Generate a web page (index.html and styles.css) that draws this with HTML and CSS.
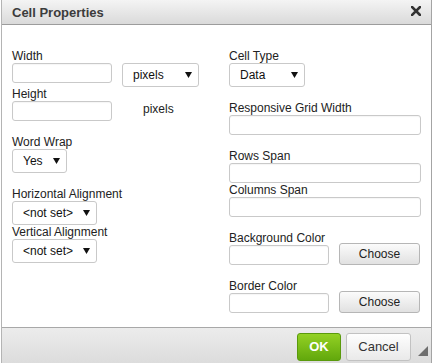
FILE: index.html
```html
<!DOCTYPE html>
<html lang="en">
<head>
    <meta charset="UTF-8">
    <meta name="viewport" content="width=device-width, initial-scale=1.0">
    <title>Cell Properties</title>
    <link rel="stylesheet" href="styles.css">
</head>
<body>
<div class="dialog">
    <div class="titlebar">
        <span class="title">Cell Properties</span>
        <svg class="close" width="10" height="10" viewBox="0 0 10 10">
            <path d="M1 1L9 9M9 1L1 9" stroke="#333" stroke-width="2.6" stroke-linecap="square"/>
        </svg>
    </div>

    <div class="content">
        <div class="col">
            <div class="group">
                <label>Width</label>
                <div class="row">
                    <input type="text" class="w100">
                    <span class="select w77">
                        <select><option>pixels</option></select>
                        <svg class="arrow" width="7" height="6"><path d="M0 0H7L3.5 6Z" fill="#111"/></svg>
                    </span>
                </div>
                <label>Height</label>
                <div class="row">
                    <input type="text" class="w100">
                    <span class="unit">pixels</span>
                </div>
            </div>
            <div class="group">
                <label>Word Wrap</label>
                <span class="select w55">
                    <select><option>Yes</option></select>
                    <svg class="arrow" width="7" height="6"><path d="M0 0H7L3.5 6Z" fill="#111"/></svg>
                </span>
            </div>
            <div class="group">
                <label>Horizontal Alignment</label>
                <span class="select w85">
                    <select><option>&lt;not set&gt;</option></select>
                    <svg class="arrow" width="7" height="6"><path d="M0 0H7L3.5 6Z" fill="#111"/></svg>
                </span>
                <label>Vertical Alignment</label>
                <span class="select w85">
                    <select><option>&lt;not set&gt;</option></select>
                    <svg class="arrow" width="7" height="6"><path d="M0 0H7L3.5 6Z" fill="#111"/></svg>
                </span>
            </div>
        </div>

        <div class="col">
            <div class="group">
                <label>Cell Type</label>
                <span class="select w76">
                    <select><option>Data</option></select>
                    <svg class="arrow" width="7" height="6"><path d="M0 0H7L3.5 6Z" fill="#111"/></svg>
                </span>
            </div>
            <div class="group">
                <label>Responsive Grid Width</label>
                <input type="text" class="wide">
            </div>
            <div class="group">
                <label>Rows Span</label>
                <input type="text" class="wide">
                <label>Columns Span</label>
                <input type="text" class="wide">
            </div>
            <div class="group">
                <label>Background Color</label>
                <div class="row">
                    <input type="text" class="w100">
                    <button class="choose">Choose</button>
                </div>
            </div>
            <div class="group">
                <label>Border Color</label>
                <div class="row">
                    <input type="text" class="w100">
                    <button class="choose">Choose</button>
                </div>
            </div>
        </div>
    </div>

    <div class="footer">
        <button class="ok">OK</button>
        <button class="cancel">Cancel</button>
        <svg class="grip" width="10" height="10"><polygon points="10,0 10,10 0,10" fill="#6e6e6e"/></svg>
    </div>
</div>
</body>
</html>
```

FILE: styles.css
```css
*{
    box-sizing: border-box;
}
body{
    margin: 0;
    background: #fff;
    font-family: "Liberation Sans", Arial, sans-serif;
    font-size: 12px;
    color: #222;
}
.dialog{
    margin-left: 1px;
    width: 431px;
    height: 363px;
    border-left: 1px solid #b4b4b4;
    border-right: 1px solid #a4a4a4;
    display: flex;
    flex-direction: column;
}
.titlebar{
    height: 28px;
    padding: 0 10px;
    display: flex;
    justify-content: space-between;
    align-items: center;
    background: linear-gradient(#f4f4f4, #dadada);
    border-bottom: 1px solid #9c9c9c;
}
.title{
    font-size: 13px;
    font-weight: bold;
    color: #3c3c3c;
    margin-top: 1px;
}
.close{
    display: block;
    margin-top: -1px;
}
.content{
    flex: 1;
    padding: 24px 0 0 10px;
    display: grid;
    grid-template-columns: 217px 1fr;
}
.group{
    margin-bottom: 14px;
}
label{
    display: block;
    height: 14px;
    line-height: 14px;
}
.row{
    display: flex;
    align-items: flex-start;
    gap: 10px;
}
input{
    display: block;
    height: 20px;
    border: 1px solid #c9c9c9;
    border-radius: 3px;
    padding: 0 4px;
    font: inherit;
    box-shadow: inset 0 1px 1px rgba(0, 0, 0, 0.04);
}
.w100{ width: 100px; }
.wide{ width: 192px; }
.unit{
    line-height: 14px;
    margin-left: 21px;
    margin-top: 1px;
}
.select{
    position: relative;
    display: block;
    height: 24px;
}
.select select{
    appearance: none;
    -webkit-appearance: none;
    width: 100%;
    height: 24px;
    border: 1px solid #c9c9c9;
    border-radius: 3px;
    background: #fff;
    padding: 0 0 0 10px;
    font: inherit;
    color: #111;
}
.arrow{
    position: absolute;
    right: 7px;
    top: 9px;
}
.w77{ width: 77px; }
.w76{ width: 76px; }
.w55{ width: 55px; }
.w85{ width: 85px; }
button{
    font-family: inherit;
    border-radius: 3px;
    cursor: pointer;
}
.choose{
    width: 81px;
    height: 22px;
    margin-top: -2px;
    font-size: 12px;
    color: #222;
    border: 1px solid #b6b6b6;
    background: linear-gradient(#fbfbfb, #e1e1e1);
}
.footer{
    position: relative;
    height: 40px;
    border-top: 1px solid #a8a8a8;
    background: linear-gradient(#ececec, #dcdcdc);
    display: flex;
    justify-content: flex-end;
    align-items: flex-start;
    gap: 5px;
    padding: 5px 20px 0 0;
}
.ok{
    width: 44px;
    height: 28px;
    font-size: 13px;
    font-weight: bold;
    color: #fff;
    border: 1px solid #5a9a0c;
    background: linear-gradient(#93d124, #62a80c);
}
.cancel{
    width: 65px;
    height: 28px;
    font-size: 13px;
    color: #333;
    border: 1px solid #c2c2c2;
    background: linear-gradient(#fefefe, #e9e9e9);
}
.grip{
    position: absolute;
    right: 3px;
    bottom: 7px;
}
```
